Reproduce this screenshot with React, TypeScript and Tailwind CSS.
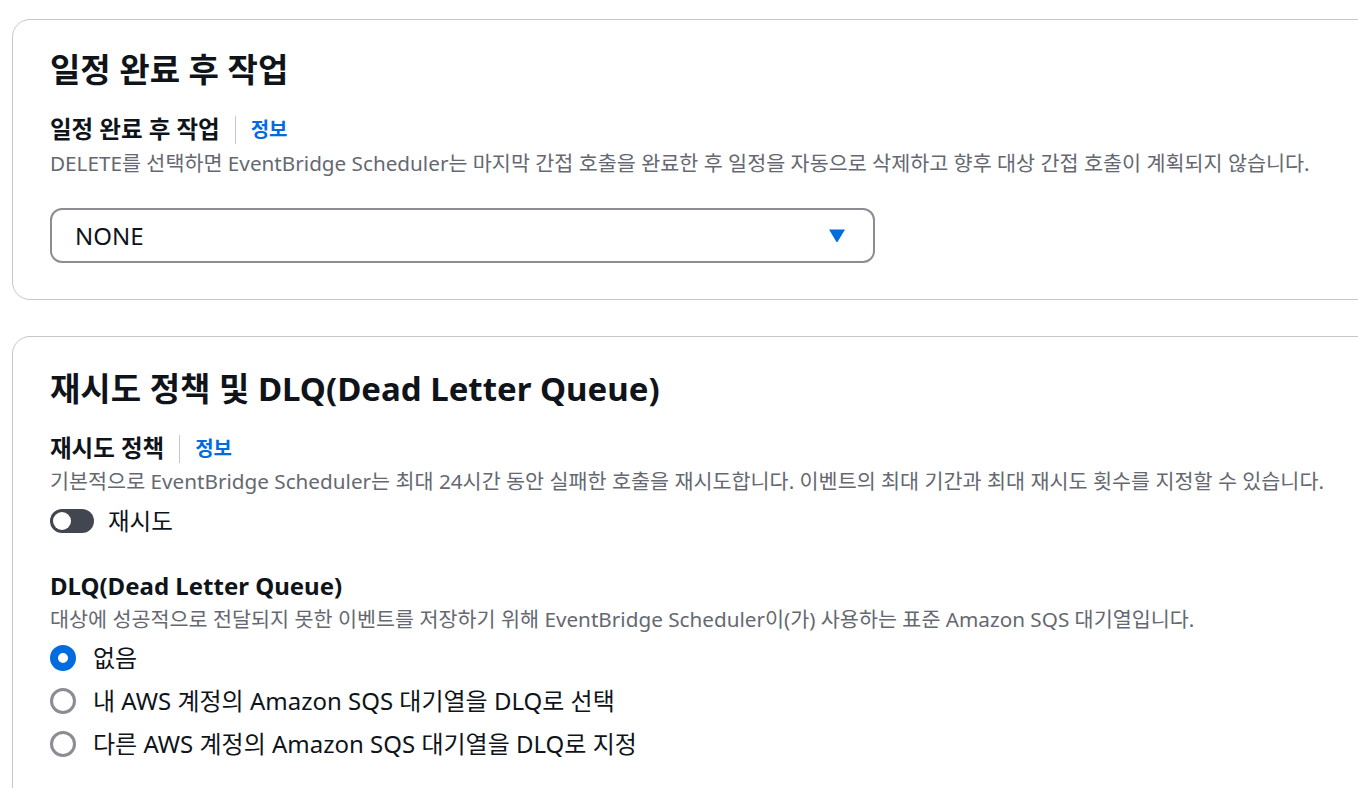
import React from "react";

const font = {
  fontFamily: '"Noto Sans", "Noto Sans CJK KR", sans-serif',
};

function InfoLink() {
  return (
    <span className="flex items-center">
      <span className="mx-[15px] h-[28px] w-px bg-[#c6c6cd]" />
      <a className="text-[20px] font-bold text-[#006ce0]">정보</a>
    </span>
  );
}

function Radio({ checked, label }: { checked?: boolean; label: string }) {
  return (
    <div className="flex h-[43px] items-center">
      {checked ? (
        <span className="h-[26px] w-[26px] rounded-full border-[8px] border-[#006ce0] bg-white" />
      ) : (
        <span className="h-[26px] w-[26px] rounded-full border-[3px] border-[#8c8c94] bg-white" />
      )}
      <span className="ml-[17px] text-[24px] leading-[30px] text-[#0f141a]">
        {label}
      </span>
    </div>
  );
}

export default function App() {
  return (
    <div
      className="h-[788px] w-[1358px] overflow-hidden bg-white pl-[12px] pt-[19px]"
      style={font}
    >
      {/* 일정 완료 후 작업 */}
      <section className="w-[1400px] rounded-[18px] border border-[#c6c6cd] pb-[36px] pl-[37px] pt-[30px]">
        <h2 className="text-[33px] font-bold leading-[40px] text-[#0f141a]">
          일정 완료 후 작업
        </h2>
        <div className="mt-[25px] flex h-[30px] items-center">
          <span className="text-[23.5px] font-bold text-[#0f141a]">
            일정 완료 후 작업
          </span>
          <InfoLink />
        </div>
        <p className="mt-[3px] text-[20.7px] leading-[30px] text-[#656871]">
          DELETE를 선택하면 EventBridge Scheduler는 마지막 간접 호출을 완료한 후
          일정을 자동으로 삭제하고 향후 대상 간접 호출이 계획되지 않습니다.
        </p>
        <div className="mt-[30px] flex h-[55px] w-[825px] items-center justify-between rounded-[12px] border-2 border-[#8c8c94] pl-[23px] pr-[27px]">
          <span className="text-[24px] leading-[30px] text-[#0f141a]">NONE</span>
          <svg width="18" height="15" viewBox="0 0 18 15">
            <path
              d="M1 1.5 L17 1.5 L9.8 13.6 Q9 14.6 8.2 13.6 Z"
              fill="#006ce0"
            />
          </svg>
        </div>
      </section>

      {/* 재시도 정책 및 DLQ */}
      <section className="mt-[36px] w-[1400px] rounded-[18px] border border-[#c6c6cd] pb-[40px] pl-[37px] pt-[32px]">
        <h2 className="text-[33px] font-bold leading-[40px] text-[#0f141a]">
          재시도 정책 및 DLQ(Dead Letter Queue)
        </h2>
        <div className="mt-[25px] flex h-[30px] items-center">
          <span className="text-[23.5px] font-bold text-[#0f141a]">재시도 정책</span>
          <InfoLink />
        </div>
        <p className="mt-[2px] text-[20.7px] leading-[30px] text-[#656871]">
          기본적으로 EventBridge Scheduler는 최대 24시간 동안 실패한 호출을
          재시도합니다. 이벤트의 최대 기간과 최대 재시도 횟수를 지정할 수
          있습니다.
        </p>
        <div className="mt-[10px] flex h-[30px] items-center">
          <span className="flex h-[24px] w-[44px] items-center rounded-full bg-[#424650] px-[3px]">
            <span className="h-[18px] w-[18px] rounded-full bg-white" />
          </span>
          <span className="ml-[14px] text-[23.5px] leading-[30px] text-[#0f141a]">
            재시도
          </span>
        </div>

        <div className="mt-[35px] h-[30px] text-[24px] font-bold leading-[30px] text-[#0f141a]">
          DLQ(Dead Letter Queue)
        </div>
        <p className="mt-[3px] text-[20.7px] leading-[30px] text-[#656871]">
          대상에 성공적으로 전달되지 못한 이벤트를 저장하기 위해 EventBridge
          Scheduler이(가) 사용하는 표준 Amazon SQS 대기열입니다.
        </p>
        <div className="mt-[2px]">
          <Radio checked label="없음" />
          <Radio label="내 AWS 계정의 Amazon SQS 대기열을 DLQ로 선택" />
          <Radio label="다른 AWS 계정의 Amazon SQS 대기열을 DLQ로 지정" />
        </div>
      </section>
    </div>
  );
}
